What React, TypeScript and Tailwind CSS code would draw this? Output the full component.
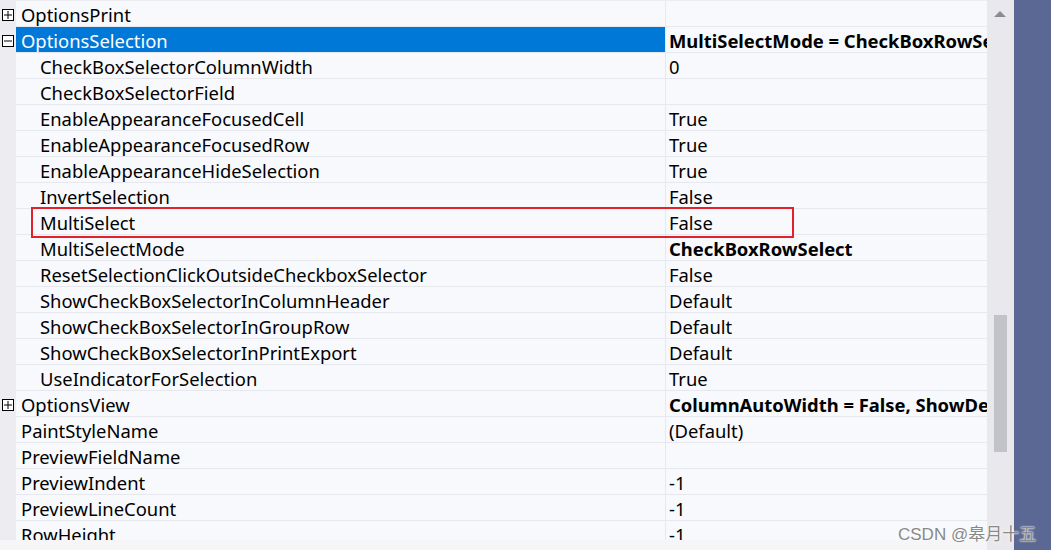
import React from "react";

type Row = {
  name: string;
  value?: string;
  level: 0 | 1;
  toggle?: "plus" | "minus";
  bold?: boolean;
  selected?: boolean;
};

const rows: Row[] = [
  { name: "OptionsPrint", level: 0, toggle: "plus" },
  { name: "OptionsSelection", value: "MultiSelectMode = CheckBoxRowSelect", level: 0, toggle: "minus", bold: true, selected: true },
  { name: "CheckBoxSelectorColumnWidth", value: "0", level: 1 },
  { name: "CheckBoxSelectorField", level: 1 },
  { name: "EnableAppearanceFocusedCell", value: "True", level: 1 },
  { name: "EnableAppearanceFocusedRow", value: "True", level: 1 },
  { name: "EnableAppearanceHideSelection", value: "True", level: 1 },
  { name: "InvertSelection", value: "False", level: 1 },
  { name: "MultiSelect", value: "False", level: 1 },
  { name: "MultiSelectMode", value: "CheckBoxRowSelect", level: 1, bold: true },
  { name: "ResetSelectionClickOutsideCheckboxSelector", value: "False", level: 1 },
  { name: "ShowCheckBoxSelectorInColumnHeader", value: "Default", level: 1 },
  { name: "ShowCheckBoxSelectorInGroupRow", value: "Default", level: 1 },
  { name: "ShowCheckBoxSelectorInPrintExport", value: "Default", level: 1 },
  { name: "UseIndicatorForSelection", value: "True", level: 1 },
  { name: "OptionsView", value: "ColumnAutoWidth = False, ShowDefaultPanel", level: 0, toggle: "plus", bold: true },
  { name: "PaintStyleName", value: "(Default)", level: 0 },
  { name: "PreviewFieldName", level: 0 },
  { name: "PreviewIndent", value: "-1", level: 0 },
  { name: "PreviewLineCount", value: "-1", level: 0 },
  { name: "RowHeight", value: "-1", level: 0 },
];

function Toggle({ kind }: { kind: "plus" | "minus" }) {
  return (
    <svg width="12" height="12" viewBox="0 0 12 12" className="block">
      <rect x="0.5" y="0.5" width="11" height="11" fill="white" stroke="black" />
      <line x1="2" y1="6" x2="10" y2="6" stroke="black" />
      {kind === "plus" && <line x1="6" y1="2" x2="6" y2="10" stroke="black" />}
    </svg>
  );
}

export default function App() {
  return (
    <div
      className="flex h-[550px] w-[1051px] overflow-hidden bg-[#f8f9fc] text-[18.4px] leading-[22px] text-black"
      style={{ fontFamily: '"Noto Sans", "Open Sans", sans-serif' }}
    >
      <div className="flex w-[987px] flex-col">
        <div className="h-px bg-[#ececf1]" />
        <div className="flex flex-1 overflow-hidden">
          {/* gutter with expand boxes */}
          <div className="flex w-[16px] shrink-0 flex-col bg-[#ededf1]">
            {rows.map((r, i) => (
              <div key={i} className="flex h-[26px] shrink-0 items-center pl-[2px] pt-[2px]">
                {r.toggle && <Toggle kind={r.toggle} />}
              </div>
            ))}
          </div>
          <div className="relative flex flex-1 flex-col">
            {rows.map((r, i) => (
              <div key={i} className="flex h-[26px] shrink-0 border-b border-[#e7e8ee]">
                <div
                  className={`flex w-[649px] shrink-0 items-center whitespace-nowrap pt-[2px] ${
                    r.level === 1 ? "pl-[24px]" : "pl-[5px]"
                  } ${r.selected ? "bg-[#0078d7] text-white" : ""}`}
                >
                  {r.name}
                </div>
                <div className="w-px shrink-0 bg-[#e7e8ee]" />
                <div
                  className={`flex min-w-0 flex-1 items-center overflow-hidden whitespace-nowrap pl-[3px] pt-[2px] ${
                    r.bold ? "font-bold" : ""
                  }`}
                >
                  {r.value}
                </div>
              </div>
            ))}
            <div className="pointer-events-none absolute left-[15px] top-[206px] h-[31px] w-[763px] border-2 border-[#e3212b]" />
          </div>
        </div>
        <div className="h-[10px] shrink-0 bg-[#f6f6f8]" />
      </div>
      {/* vertical scrollbar */}
      <div className="relative w-[27px] shrink-0 bg-[#e9e9ed]">
        <div className="absolute left-[7px] top-[11px] h-0 w-0 border-x-[6px] border-b-[6px] border-x-transparent border-b-[#8a8b94]" />
        <div className="absolute left-[7px] top-[315px] h-[137px] w-[13px] bg-[#c2c3c9]" />
      </div>
      <div className="flex-1 bg-[#5b6894]" />
      <div
        className="pointer-events-none absolute left-[898px] top-[522px] text-[17px] leading-normal text-[#888]"
        style={{ fontFamily: '"Liberation Sans", "Noto Sans CJK SC", sans-serif', textShadow: "0 0 2px #fff, 0 0 2px #fff" }}
      >
        CSDN @皋月十五
      </div>
    </div>
  );
}
